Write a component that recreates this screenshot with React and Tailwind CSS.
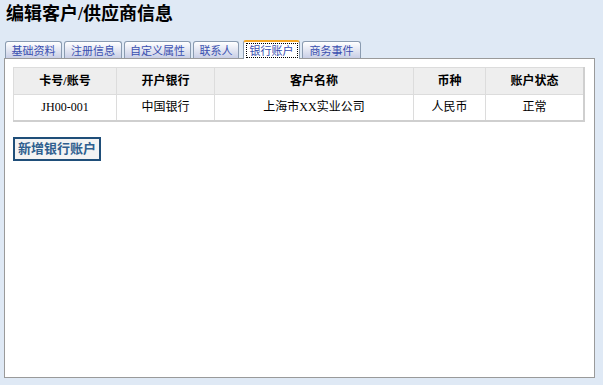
import React from "react";

const tabs = [
  { name: "基础资料", w: "w-[57px]" },
  { name: "注册信息", w: "w-[58px]" },
  { name: "自定义属性", w: "w-[67px]" },
  { name: "联系人", w: "w-[46px]" },
  { name: "银行账户", w: "w-[57px]", active: true },
  { name: "商务事件", w: "w-[59px]" },
];

const rows = [
  { card: "JH00-001", bank: "中国银行", name: "上海市XX实业公司", currency: "人民币", status: "正常" },
];

const App = () => {
  return (
    <div className="w-[603px] h-[385px] bg-[#dfe9f5] overflow-hidden font-['Liberation_Serif','Noto_Sans_CJK_SC',serif]">
      <h1 className="pl-[6px] pt-[3px] h-[40px] text-[18px] leading-[22px] font-bold text-black font-['Liberation_Serif','Noto_Sans_CJK_SC',serif]">
        编辑客户/供应商信息
      </h1>

      {/* tabs */}
      <div className="flex items-end gap-[2px] pl-[5px] h-[18px] font-['Noto_Sans_CJK_SC',sans-serif]">
        {tabs.map((t) =>
          t.active ? (
            <div
              key={t.name}
              className={`${t.w} h-[19px] -mb-[1px] ml-[2px] bg-white border border-[#8a9bb0] border-b-0 border-t-2 border-t-[#f5a623] rounded-t-[3px] flex items-start justify-center relative z-10`}
            >
              <span className="mt-[1px] px-[3px] text-[11px] leading-[13px] text-[#3a4fb0] border border-dotted border-black">
                {t.name}
              </span>
            </div>
          ) : (
            <div
              key={t.name}
              className={`${t.w} h-[17px] bg-gradient-to-b from-white to-[#c9cfe6] border border-[#8a9bb0] border-b-0 rounded-t-[3px] flex items-center justify-center text-[11px] leading-[13px] text-[#3a4fb0]`}
            >
              {t.name}
            </div>
          )
        )}
      </div>

      {/* panel */}
      <div className="mx-[4px] w-[591px] h-[320px] bg-white border border-[#9a9a9a] pt-[8px] pl-[8px]">
        <table className="w-[572px] border-collapse text-[12px] text-black border-r-2 border-b-2 border-[#cfcfcf]">
          <thead>
            <tr className="bg-[#eeeeee] h-[27px]">
              <th className="w-[103px] border border-[#dcdcdc] font-bold">卡号/账号</th>
              <th className="w-[98px] border border-[#dcdcdc] font-bold">开户银行</th>
              <th className="w-[199px] border border-[#dcdcdc] font-bold">客户名称</th>
              <th className="w-[72px] border border-[#dcdcdc] font-bold">币种</th>
              <th className="border border-[#dcdcdc] font-bold">账户状态</th>
            </tr>
          </thead>
          <tbody>
            {rows.map((r) => (
              <tr key={r.card} className="h-[26px]">
                <td className="border border-[#dcdcdc] text-center">{r.card}</td>
                <td className="border border-[#dcdcdc] text-center">{r.bank}</td>
                <td className="border border-[#dcdcdc] text-center">{r.name}</td>
                <td className="border border-[#dcdcdc] text-center">{r.currency}</td>
                <td className="border border-[#dcdcdc] text-center">{r.status}</td>
              </tr>
            ))}
          </tbody>
        </table>

        <button className="mt-[15px] h-[24px] px-[3px] bg-[#f3f3f3] border-2 border-[#1f4e79] text-[13px] leading-[18px] font-bold text-[#2f5f8f]">
          新增银行账户
        </button>
      </div>
    </div>
  );
};

export default App;
